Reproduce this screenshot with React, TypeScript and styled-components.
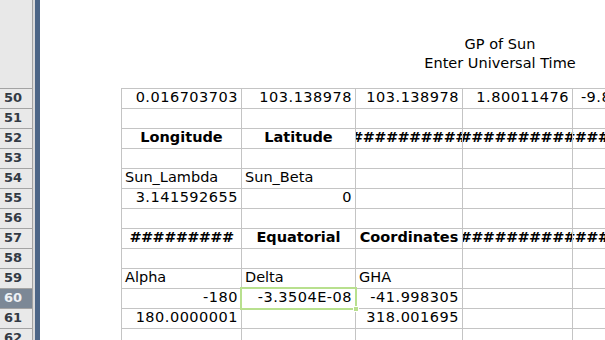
import styled, { createGlobalStyle, css } from "styled-components";

type Align = "l" | "r" | "c";
type CellData = { t?: string; a?: Align; b?: boolean; hash?: boolean; sel?: boolean };
type RowData = { n: number; cells: CellData[] };

const COLS = [120, 114, 107, 110, 120];

const r = (t: string): CellData => ({ t, a: "r" });
const l = (t: string): CellData => ({ t, a: "l" });
const head = (t: string): CellData => ({ t, a: "c", b: true });
const hash = (count: number): CellData => ({ t: "#".repeat(count), a: "c", b: true, hash: true });
const empty: CellData = {};

const rows: RowData[] = [
  { n: 50, cells: [r("0.016703703"), r("103.138978"), r("103.138978"), r("1.80011476"), r("-9.800114762")] },
  { n: 51, cells: [] },
  { n: 52, cells: [head("Longitude"), head("Latitude"), hash(10), hash(12), hash(12)] },
  { n: 53, cells: [] },
  { n: 54, cells: [l("Sun_Lambda"), l("Sun_Beta")] },
  { n: 55, cells: [r("3.141592655"), r("0")] },
  { n: 56, cells: [] },
  { n: 57, cells: [hash(9), head("Equatorial"), head("Coordinates"), hash(12), hash(12)] },
  { n: 58, cells: [] },
  { n: 59, cells: [l("Alpha"), l("Delta"), l("GHA")] },
  { n: 60, cells: [r("-180"), { ...r("-3.3504E-08"), sel: true }, r("-41.998305")] },
  { n: 61, cells: [r("180.0000001"), empty, r("318.001695")] },
  { n: 62, cells: [] },
];

const SELECTED_ROW = 60;

const App = () => {
  return (
    <Screen>
      <GlobalStyle />
      <RowHeaders>
        <HeaderList>
          {rows.map((row) => (
            <RowHeader key={row.n} $active={row.n === SELECTED_ROW}>
              {row.n}
            </RowHeader>
          ))}
        </HeaderList>
      </RowHeaders>
      <Splitter />
      <Sheet>
        <Banner>
          <Title>
            GP of Sun
            <br />
            Enter Universal Time
          </Title>
        </Banner>
        <Table>
          {rows.map((row) => (
            <Row key={row.n}>
              {COLS.map((w, i) => {
                const c = row.cells[i] || empty;
                return (
                  <Cell
                    key={i}
                    $w={w}
                    $align={c.a || "l"}
                    $bold={!!c.b}
                    $hash={!!c.hash}
                    $num={c.a === "r"}
                    $selected={!!c.sel}
                  >
                    {c.t}
                  </Cell>
                );
              })}
            </Row>
          ))}
        </Table>
      </Sheet>
    </Screen>
  );
};

const GlobalStyle = createGlobalStyle`
  html, body {
    margin: 0;
    padding: 0;
    background: #ffffff;
    overflow: hidden;
  }
  body {
    font-family: "DejaVu Sans", Verdana, sans-serif;
    color: #000;
  }
`;

const Screen = styled.div`
  display: flex;
  width: 605px;
  height: 340px;
  overflow: hidden;
`;

const RowHeaders = styled.div`
  flex: 0 0 32px;
  background: #e8e8e8;
  border-right: 1px solid #a3a3a3;
  padding-top: 88px;
`;

const HeaderList = styled.div`
  border-top: 1px solid #a3a3a3;
`;

const RowHeader = styled.div<{ $active: boolean }>`
  box-sizing: border-box;
  height: 20px;
  border-bottom: 1px solid #a3a3a3;
  padding-right: 6px;
  text-align: center;
  font-size: 13px;
  font-weight: bold;
  line-height: 17px;
  color: #333a44;
  background: #e9e9e9;
  ${(p) =>
    p.$active &&
    css`
      background: #7c8896;
      color: #eef1f4;
    `}
`;

const Splitter = styled.div`
  flex: 0 0 5px;
  border-left: 2px solid #dadada;
  background: #4c6586;
`;

const Sheet = styled.div`
  flex: 1;
  min-width: 0;
`;

const Banner = styled.div`
  height: 88px;
  box-sizing: border-box;
  padding-top: 35px;
`;

const Title = styled.div`
  width: 200px;
  margin-left: 360px;
  text-align: center;
  font-size: 14.5px;
  line-height: 19px;
`;

const Table = styled.div`
  margin-left: 81px;
  border-top: 1px solid #c4c4c4;
  border-left: 1px solid #c4c4c4;
  width: 700px;
`;

const Row = styled.div`
  display: flex;
  height: 20px;
`;

const Cell = styled.div<{
  $w: number;
  $align: Align;
  $bold: boolean;
  $hash: boolean;
  $num: boolean;
  $selected: boolean;
}>`
  position: relative;
  box-sizing: border-box;
  flex: 0 0 ${(p) => p.$w}px;
  height: 20px;
  border-right: 1px solid #c4c4c4;
  border-bottom: 1px solid #c4c4c4;
  display: flex;
  justify-content: ${(p) =>
    p.$align === "r" ? "flex-end" : p.$align === "c" ? "center" : "flex-start"};
  padding: 0 3px;
  overflow: ${(p) => (p.$hash ? "hidden" : "visible")};
  white-space: nowrap;
  font-size: 14.5px;
  line-height: 17px;
  font-weight: ${(p) => (p.$bold ? "bold" : "normal")};
  letter-spacing: ${(p) => (p.$hash ? "-0.6px" : p.$num ? "0.5px" : "0")};
  ${(p) =>
    p.$selected &&
    css`
      z-index: 2;
      &::after {
        content: "";
        position: absolute;
        left: -2px;
        top: -2px;
        right: -2px;
        bottom: -2px;
        border: 2px solid #b8e08e;
      }
      &::before {
        content: "";
        position: absolute;
        right: -4px;
        bottom: -4px;
        width: 4px;
        height: 4px;
        background: #b8e08e;
        border: 1px solid #ffffff;
        z-index: 1;
      }
    `}
`;

export default App;
